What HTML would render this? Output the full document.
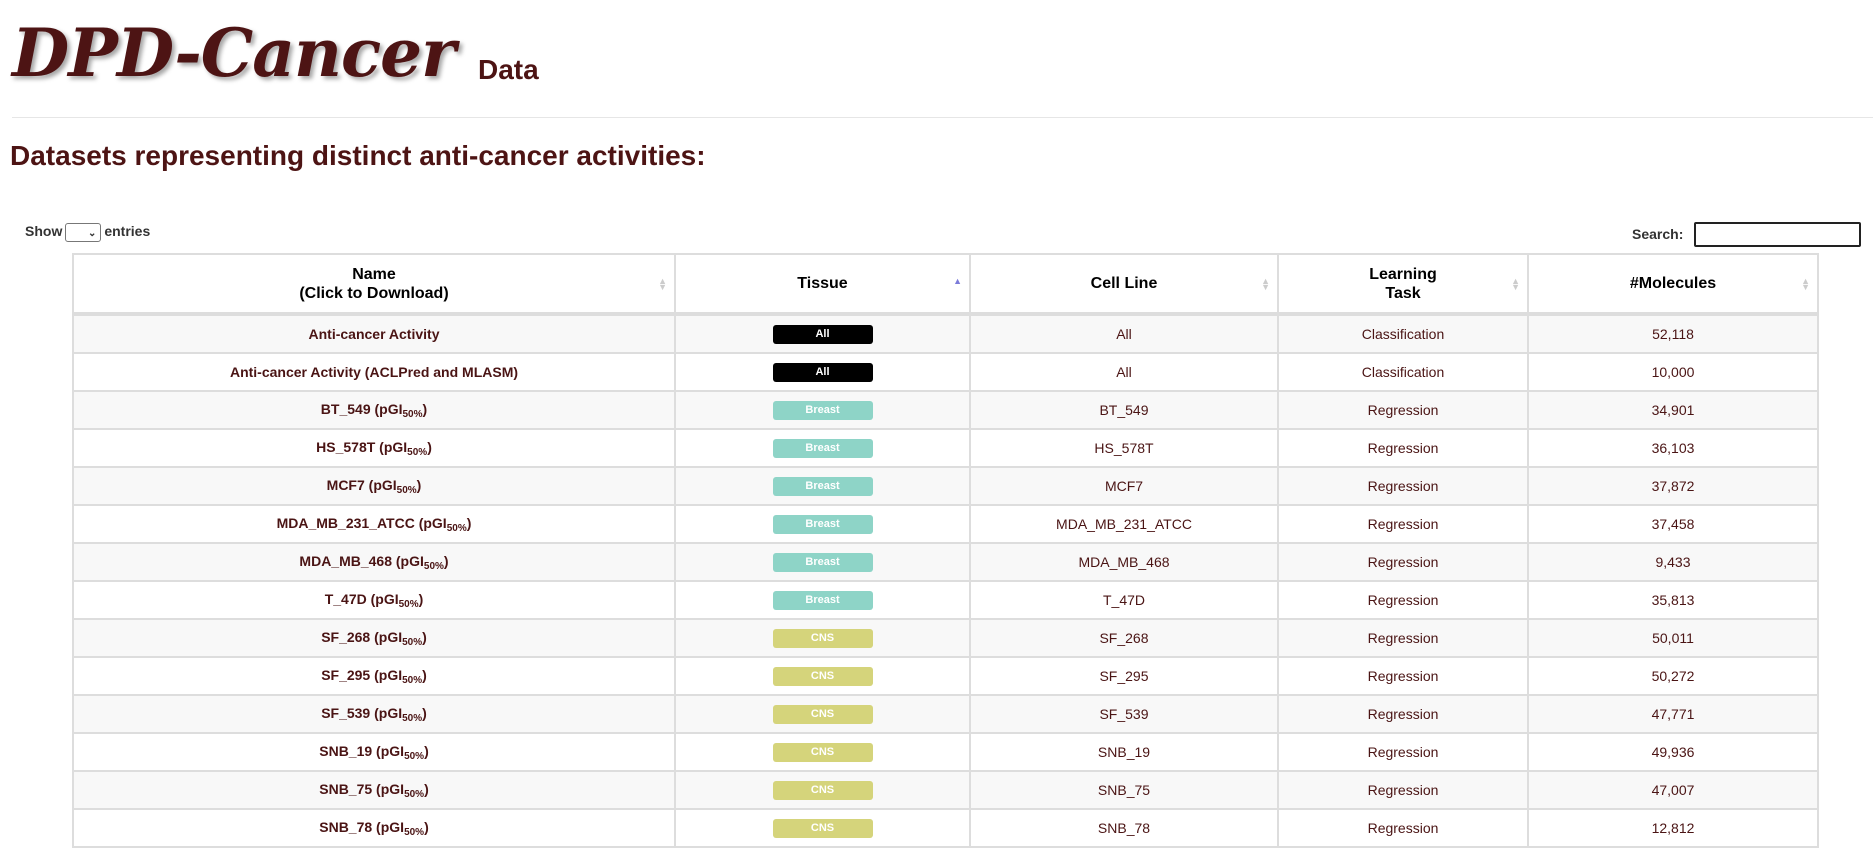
<!DOCTYPE html>
<html><head><meta charset="utf-8"><style>
body{margin:0;background:#fff;font-family:"Liberation Sans",Arial,sans-serif;width:1873px;height:844px;overflow:hidden;position:relative}
.t{position:absolute;left:12px;top:14px;font-family:"DejaVu Serif","Liberation Serif",serif;font-style:italic;font-weight:bold;font-size:66px;color:#4d1414;text-shadow:3px 3px 4px rgba(0,0,0,.35);letter-spacing:-1px}
.d{position:absolute;left:478px;top:54px;font-size:28px;font-weight:bold;color:#4d1414}
hr{position:absolute;top:117px;left:12px;width:1861px;margin:0;border:0;border-top:1px solid #e6e6e6}
h2{position:absolute;left:10px;top:140px;margin:0;font-size:28px;font-weight:bold;color:#4d1414}
.show{position:absolute;left:25px;top:223px;font-size:14px;font-weight:bold;color:#333}
.sel{display:inline-block;width:36px;height:19px;border:1px solid #777;border-radius:3px;vertical-align:middle;margin:0 3px;text-align:right;font-size:10px;line-height:19px;box-sizing:border-box;padding-right:4px}
.search{position:absolute;left:1632px;top:226px;font-size:14px;font-weight:bold;color:#333}
.inp{position:absolute;left:1694px;top:222px;width:167px;height:25px;border:2px solid #222;box-sizing:border-box;border-radius:2px}
table{position:absolute;left:72px;top:253px;width:1745px;border-collapse:collapse;table-layout:fixed}
th,td{border:2px solid #ddd;text-align:center;font-size:14px}
th{height:55px;position:relative;color:#000;font-size:16px;border-bottom:4px solid #ddd;line-height:19px}
th i{position:absolute;right:7px;top:23px;font-style:normal;font-size:9px;color:#ccc;line-height:6px}
td{height:34px;color:#4a1414}
tr:nth-child(odd) td{background:#f8f8f8}
td.n{font-weight:bold}
sub{font-size:10px;vertical-align:-3px}
.b{display:inline-block;width:100px;height:19px;line-height:19px;border-radius:3px;color:#fff;font-size:11px;font-weight:bold}
.a{background:#000}.br{background:#8ed4c7}.c{background:#d5d47b}
</style></head><body>
<div class="t">DPD-Cancer</div><div class="d">Data</div>
<hr>
<h2>Datasets representing distinct anti-cancer activities:</h2>
<div class="show">Show<span class="sel">⌄</span>entries</div>
<div class="search">Search:</div><div class="inp"></div>
<table>
<colgroup><col style="width:602px"><col style="width:295px"><col style="width:308px"><col style="width:250px"><col style="width:290px"></colgroup>
<thead><tr><th>Name<br>(Click to Download)<i>▲<br>▼</i></th><th>Tissue<i style="color:#7b7bd9">▲</i></th><th>Cell Line<i>▲<br>▼</i></th><th>Learning<br>Task<i>▲<br>▼</i></th><th>#Molecules<i>▲<br>▼</i></th></tr></thead>
<tbody>
<tr><td class="n">Anti-cancer Activity</td><td><span class="b a">All</span></td><td>All</td><td>Classification</td><td>52,118</td></tr>
<tr><td class="n">Anti-cancer Activity (ACLPred and MLASM)</td><td><span class="b a">All</span></td><td>All</td><td>Classification</td><td>10,000</td></tr>
<tr><td class="n">BT_549 (pGI<sub>50%</sub>)</td><td><span class="b br">Breast</span></td><td>BT_549</td><td>Regression</td><td>34,901</td></tr>
<tr><td class="n">HS_578T (pGI<sub>50%</sub>)</td><td><span class="b br">Breast</span></td><td>HS_578T</td><td>Regression</td><td>36,103</td></tr>
<tr><td class="n">MCF7 (pGI<sub>50%</sub>)</td><td><span class="b br">Breast</span></td><td>MCF7</td><td>Regression</td><td>37,872</td></tr>
<tr><td class="n">MDA_MB_231_ATCC (pGI<sub>50%</sub>)</td><td><span class="b br">Breast</span></td><td>MDA_MB_231_ATCC</td><td>Regression</td><td>37,458</td></tr>
<tr><td class="n">MDA_MB_468 (pGI<sub>50%</sub>)</td><td><span class="b br">Breast</span></td><td>MDA_MB_468</td><td>Regression</td><td>9,433</td></tr>
<tr><td class="n">T_47D (pGI<sub>50%</sub>)</td><td><span class="b br">Breast</span></td><td>T_47D</td><td>Regression</td><td>35,813</td></tr>
<tr><td class="n">SF_268 (pGI<sub>50%</sub>)</td><td><span class="b c">CNS</span></td><td>SF_268</td><td>Regression</td><td>50,011</td></tr>
<tr><td class="n">SF_295 (pGI<sub>50%</sub>)</td><td><span class="b c">CNS</span></td><td>SF_295</td><td>Regression</td><td>50,272</td></tr>
<tr><td class="n">SF_539 (pGI<sub>50%</sub>)</td><td><span class="b c">CNS</span></td><td>SF_539</td><td>Regression</td><td>47,771</td></tr>
<tr><td class="n">SNB_19 (pGI<sub>50%</sub>)</td><td><span class="b c">CNS</span></td><td>SNB_19</td><td>Regression</td><td>49,936</td></tr>
<tr><td class="n">SNB_75 (pGI<sub>50%</sub>)</td><td><span class="b c">CNS</span></td><td>SNB_75</td><td>Regression</td><td>47,007</td></tr>
<tr><td class="n">SNB_78 (pGI<sub>50%</sub>)</td><td><span class="b c">CNS</span></td><td>SNB_78</td><td>Regression</td><td>12,812</td></tr>
</tbody></table>
</body></html>
